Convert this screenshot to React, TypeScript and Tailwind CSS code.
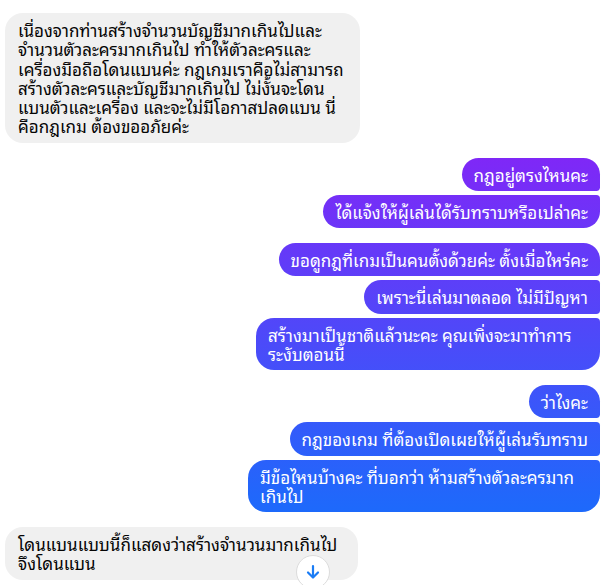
import React from "react";

const font = {
  fontFamily:
    '"Noto Sans Thai Looped", Loma, Garuda, Tahoma, "Leelawadee UI", "Noto Sans", "Noto Sans Thai", "Liberation Sans", sans-serif',
};

function Out({ lines, pos, w }: { lines: string[]; pos: "single" | "first" | "mid" | "last"; w?: string }) {
  const r =
    pos === "single"
      ? "rounded-[18px]"
      : pos === "first"
      ? "rounded-l-[18px] rounded-tr-[18px] rounded-br-[4px]"
      : pos === "mid"
      ? "rounded-l-[18px] rounded-r-[4px]"
      : "rounded-l-[18px] rounded-tr-[4px] rounded-br-[18px]";
  return (
    <div
      className={`${r} ${w ?? "w-fit"} bg-[linear-gradient(180deg,#ab0af6_0px,#7a2bf7_175px,#2167fb_495px,#0c74fb_585px)] bg-fixed text-white px-3 py-[7px] text-[17px] leading-[19.25px]`}
    >
      {lines.map((l, i) => (
        <div key={i} className="whitespace-nowrap">
          {l}
        </div>
      ))}
    </div>
  );
}

function In({ lines, w }: { lines: string[]; w: string }) {
  return (
    <div className={`rounded-[18px] ${w} bg-[#f0f0f0] text-[#050505] px-[13px] py-[7px] text-[17px] leading-[19.25px]`}>
      {lines.map((l, i) => (
        <div key={i} className="whitespace-nowrap">
          {l}
        </div>
      ))}
    </div>
  );
}

export default function App() {
  return (
    <div className="w-[605px] h-[585px] bg-white overflow-hidden relative" style={font}>
      <div className="flex flex-col px-[5px] pt-[13px]">
        <div className="flex">
          <In
            w="w-[355px]"
            lines={[
              "เนื่องจากท่านสร้างจำนวนบัญชีมากเกินไปและ",
              "จำนวนตัวละครมากเกินไป ทำให้ตัวละครและ",
              "เครื่องมือถือโดนแบนค่ะ กฎเกมเราคือไม่สามารถ",
              "สร้างตัวละครและบัญชีมากเกินไป ไม่งั้นจะโดน",
              "แบนตัวและเครื่อง และจะไม่มีโอกาสปลดแบน นี่",
              "คือกฎเกม ต้องขออภัยค่ะ",
            ]}
          />
        </div>

        <div className="flex flex-col items-end gap-[4px] mt-[15px]">
          <Out pos="first" lines={["กฎอยู่ตรงไหนคะ"]} />
          <Out pos="last" lines={["ได้แจ้งให้ผู้เล่นได้รับทราบหรือเปล่าคะ"]} />
        </div>

        <div className="flex flex-col items-end gap-[4px] mt-[15px]">
          <Out pos="first" lines={["ขอดูกฎที่เกมเป็นคนตั้งด้วยค่ะ ตั้งเมื่อไหร่คะ"]} />
          <Out pos="mid" lines={["เพราะนี่เล่นมาตลอด ไม่มีปัญหา"]} />
          <Out pos="last" w="w-[344px]" lines={["สร้างมาเป็นชาติแล้วนะคะ คุณเพิ่งจะมาทำการ", "ระงับตอนนี้"]} />
        </div>

        <div className="flex flex-col items-end gap-[4px] mt-[15px]">
          <Out pos="first" lines={["ว่าไงคะ"]} />
          <Out pos="mid" lines={["กฎของเกม ที่ต้องเปิดเผยให้ผู้เล่นรับทราบ"]} />
          <Out pos="last" w="w-[352px]" lines={["มีข้อไหนบ้างคะ ที่บอกว่า ห้ามสร้างตัวละครมาก", "เกินไป"]} />
        </div>

        <div className="flex mt-[15px]">
          <In w="w-[353px]" lines={["โดนแบนแบบนี้ก็แสดงว่าสร้างจำนวนมากเกินไป", "จึงโดนแบน"]} />
        </div>
      </div>

      <div className="absolute left-[296px] top-[555px] w-[34px] h-[34px] rounded-full bg-white border border-[#dcdcdc] flex items-center justify-center">
        <svg width="16" height="16" viewBox="0 0 16 16" fill="none" stroke="#1a7cf5" strokeWidth="2.2" strokeLinecap="round" strokeLinejoin="round">
          <path d="M8 2v11" />
          <path d="M3 8.5l5 5 5-5" />
        </svg>
      </div>
    </div>
  );
}
